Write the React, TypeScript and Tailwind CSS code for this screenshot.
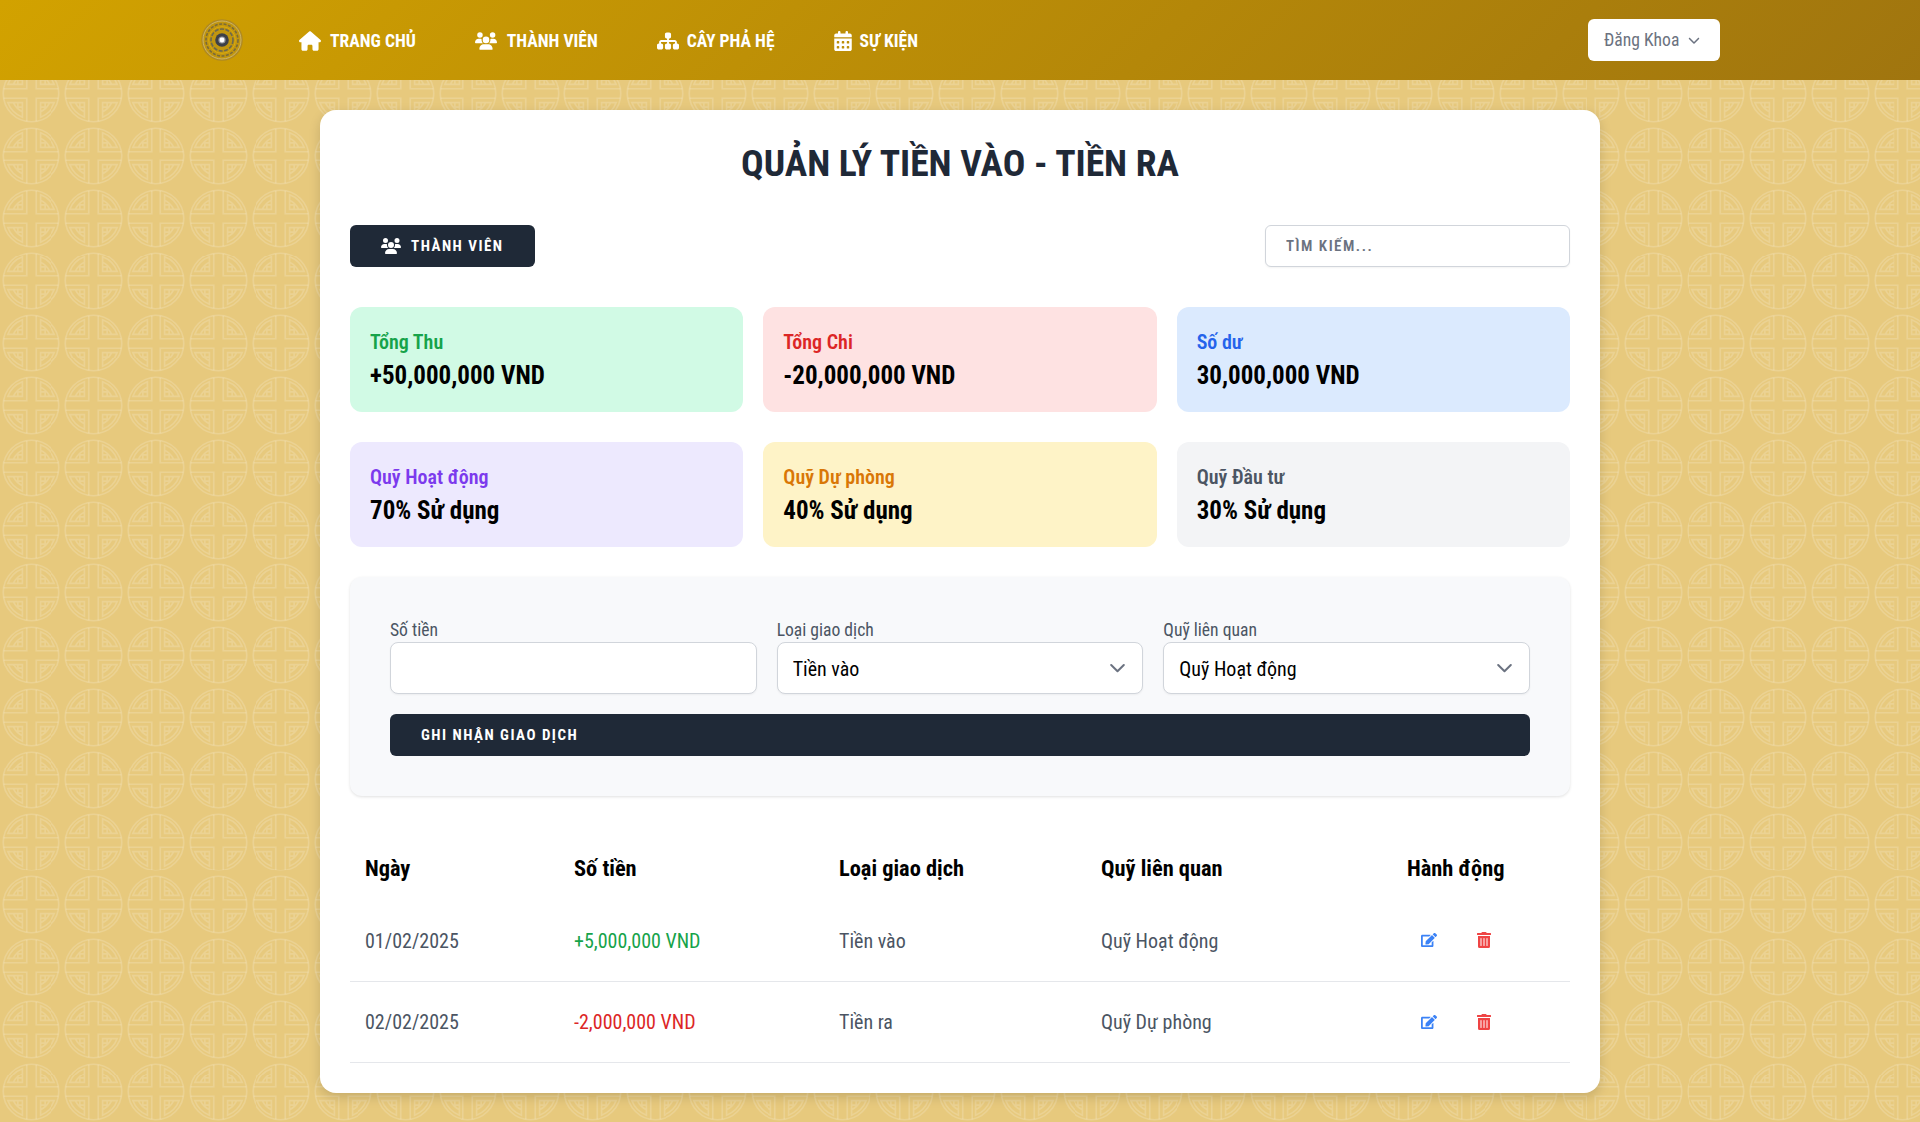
import React from "react";
import { FaHouse, FaUsers, FaSitemap, FaCalendarDays, FaChevronDown } from "react-icons/fa6";
import { FaEdit, FaTrashAlt } from "react-icons/fa";

function Logo() {
  return (
    <svg width="42" height="42" viewBox="0 0 42 42" aria-hidden="true">
      <circle cx="21" cy="21" r="20.8" fill="#a8842a" opacity="0.8" />
      <circle cx="21" cy="21" r="19" fill="#c1960f" stroke="#cdb56a" strokeWidth="1" />
      <circle cx="21" cy="21" r="16" fill="none" stroke="#7a6a3a" strokeWidth="1.6" strokeDasharray="3 1.5" />
      <circle cx="21" cy="21" r="13.4" fill="none" stroke="#d9a90f" strokeWidth="1" />
      <circle cx="21" cy="21" r="11" fill="none" stroke="#6b6850" strokeWidth="1.6" strokeDasharray="4 1.5" />
      <circle cx="21" cy="21" r="6.8" fill="#3d4048" />
      <circle cx="21" cy="21" r="3.6" fill="#9a9ca3" />
      <circle cx="21" cy="21" r="2.4" fill="#ffffff" />
    </svg>
  );
}

function NavItem({ icon, label, className }: { icon: React.ReactNode; label: string; className: string }) {
  return (
    <a className={`flex items-center pt-[2px] text-[17.6px] font-bold uppercase text-white ${className}`}>
      {icon}
      <span>{label}</span>
    </a>
  );
}

function Stat({ label, value, bg, color }: { label: string; value: string; bg: string; color: string }) {
  return (
    <div className={`h-[105px] rounded-xl px-5 pt-[21px] ${bg}`}>
      <div className={`text-[20px] font-semibold leading-[29px] ${color}`}>{label}</div>
      <div className="text-[25px] font-bold leading-[38px] text-black">{value}</div>
    </div>
  );
}

function SelectField({ label, options }: { label: string; options: string[] }) {
  return (
    <label className="block">
      <span className="block h-[25px] text-[17.6px] leading-[26px] text-[#4b5563]">{label}</span>
      <span className="relative block">
        <select className="h-[52px] w-full appearance-none rounded-lg border border-[#d1d5db] bg-white px-[15px] pt-px text-[20px] text-black shadow-[0_1px_2px_rgba(0,0,0,0.05)]">
          {options.map((o) => (
            <option key={o}>{o}</option>
          ))}
        </select>
        <svg className="absolute right-[18px] top-[21px]" width="15" height="12" viewBox="0 0 15 12" fill="none" aria-hidden="true">
          <path d="M1.2 2 7.5 8.3 13.8 2" stroke="#6b7280" strokeWidth="2" strokeLinecap="round" strokeLinejoin="round" />
        </svg>
      </span>
    </label>
  );
}

const rows = [
  { date: "01/02/2025", amount: "+5,000,000 VND", color: "text-[#16a34a]", type: "Tiền vào", fund: "Quỹ Hoạt động" },
  { date: "02/02/2025", amount: "-2,000,000 VND", color: "text-[#dc2626]", type: "Tiền ra", fund: "Quỹ Dự phòng" },
];

export default function App() {
  return (
    <div className="min-h-[1122px] bg-[#e7c97d] bg-[url('data:image/svg+xml,%3Csvg%20xmlns=%22http://www.w3.org/2000/svg%22%20xmlns:x=%22http://www.w3.org/1999/xlink%22%20width=%2262.4%22%20height=%2262.4%22%20viewBox=%22-31.2%20-31.2%2062.4%2062.4%22%3E%3Cdefs%3E%3Cpath%20id=%22q%22%20d=%22M-4.7-27.6V-4.7H-27.6M-9-23.5A25%2025%200%200%200-23.5-9H-9ZM-13.5-9V-13.5H-9V-18A19%2019%200%200%200-18-9%22/%3E%3C/defs%3E%3Cg%20fill=%22none%22%20stroke=%22%23fff%22%20stroke-opacity=%22.17%22%20stroke-width=%221.6%22%3E%3Ccircle%20r=%2228%22/%3E%3Cuse%20x:href=%22%23q%22/%3E%3Cuse%20x:href=%22%23q%22%20transform=%22scale%28-1%201%29%22/%3E%3Cuse%20x:href=%22%23q%22%20transform=%22scale%281%20-1%29%22/%3E%3Cuse%20x:href=%22%23q%22%20transform=%22scale%28-1%20-1%29%22/%3E%3C/g%3E%3C/svg%3E')] bg-[length:62.4px_62.4px] font-['Roboto','Liberation_Sans',sans-serif] [font-stretch:75%]">
      <header className="h-20 bg-[linear-gradient(135deg,#d2a200,#a0750f)]">
        <nav className="mx-auto flex h-full max-w-[1536px] items-center pl-[9px] pr-[8px]">
          <Logo />
          <NavItem className="ml-[56px]" icon={<FaHouse className="mr-[9px] text-[22px]" />} label="Trang chủ" />
          <NavItem className="ml-[59px]" icon={<FaUsers className="mr-[10px] text-[22px]" />} label="Thành viên" />
          <NavItem className="ml-[59px]" icon={<FaSitemap className="mr-[8px] text-[22px]" />} label="Cây phả hệ" />
          <NavItem className="ml-[58px]" icon={<FaCalendarDays className="mr-[7px] text-[20px]" />} label="Sự kiện" />
          <button className="ml-auto flex h-[42px] w-[132px] items-center gap-[9px] rounded-md bg-white pl-[16px] text-[17.6px] text-[#6b7280]">
            Đăng Khoa
            <FaChevronDown className="text-[12px]" />
          </button>
        </nav>
      </header>

      <main className="mx-auto mt-[30px] w-[1280px] rounded-2xl bg-white p-[30px] shadow-[0_4px_12px_rgba(0,0,0,0.15)]">
        <h1 className="h-[45px] text-center text-[37.6px] font-bold uppercase leading-[47px] text-[#1f2937]">
          Quản lý tiền vào - tiền ra
        </h1>

        <div className="mt-[40px] flex items-center justify-between">
          <button className="flex h-[42px] items-center gap-[10px] rounded-md bg-[#1f2937] px-[31px] text-[15px] font-bold uppercase tracking-[1.5px] text-white">
            <FaUsers className="text-[20px]" />
            Thành viên
          </button>
          <input
            placeholder="TÌM KIẾM..."
            className="h-[42px] w-[305px] rounded-md border border-[#d1d5db] bg-white px-5 text-[15px] font-semibold tracking-[1.5px] shadow-[0_1px_2px_rgba(0,0,0,0.05)] placeholder:text-[#6b7280]"
          />
        </div>

        <div className="mt-10 grid grid-cols-3 gap-x-5 gap-y-[30px]">
          <Stat label="Tổng Thu" value="+50,000,000 VND" bg="bg-[#d1fae5]" color="text-[#16a34a]" />
          <Stat label="Tổng Chi" value="-20,000,000 VND" bg="bg-[#fee2e2]" color="text-[#dc2626]" />
          <Stat label="Số dư" value="30,000,000 VND" bg="bg-[#dbeafe]" color="text-[#2563eb]" />
          <Stat label="Quỹ Hoạt động" value="70% Sử dụng" bg="bg-[#ede9fe]" color="text-[#7c3aed]" />
          <Stat label="Quỹ Dự phòng" value="40% Sử dụng" bg="bg-[#fef3c7]" color="text-[#d97706]" />
          <Stat label="Quỹ Đầu tư" value="30% Sử dụng" bg="bg-[#f3f4f6]" color="text-[#4b5563]" />
        </div>

        <section className="mt-[30px] rounded-xl bg-[#f8f9fb] p-10 shadow-[0_1px_3px_rgba(0,0,0,0.12)]">
          <div className="grid grid-cols-3 gap-5">
            <label className="block">
              <span className="block h-[25px] text-[17.6px] leading-[26px] text-[#4b5563]">Số tiền</span>
              <input className="h-[52px] w-full rounded-lg border border-[#d1d5db] bg-white px-[15px] text-lg shadow-[0_1px_2px_rgba(0,0,0,0.05)]" />
            </label>
            <SelectField label="Loại giao dịch" options={["Tiền vào", "Tiền ra"]} />
            <SelectField label="Quỹ liên quan" options={["Quỹ Hoạt động", "Quỹ Dự phòng", "Quỹ Đầu tư"]} />
          </div>
          <button className="mt-5 flex h-[42px] w-full items-center rounded-md bg-[#1f2937] px-[31px] text-[15px] font-bold uppercase tracking-[1.5px] text-white">
            Ghi nhận giao dịch
          </button>
        </section>

        <table className="mt-10 w-full table-fixed border-collapse text-left">
          <thead>
            <tr className="h-[64px] text-[22.4px] font-bold text-black">
              <th className="w-[209px] px-[15px] pt-[2px]">Ngày</th>
              <th className="w-[265px] px-[15px] pt-[2px]">Số tiền</th>
              <th className="w-[262px] px-[15px] pt-[2px]">Loại giao dịch</th>
              <th className="w-[306px] px-[15px] pt-[2px]">Quỹ liên quan</th>
              <th className="px-[15px] pt-[2px]">Hành động</th>
            </tr>
          </thead>
          <tbody className="text-[20px] text-[#4b5563]">
            {rows.map((r) => (
              <tr key={r.date} className="h-[81px] border-b border-[#e5e7eb]">
                <td className="px-[15px] pt-px">{r.date}</td>
                <td className={`px-[15px] pt-px ${r.color}`}>{r.amount}</td>
                <td className="px-[15px] pt-px">{r.type}</td>
                <td className="px-[15px] pt-px">{r.fund}</td>
                <td className="px-[15px]">
                  <div className="flex items-center">
                    <button className="ml-[14px] text-[16px] text-[#3b82f6]" aria-label="Sửa">
                      <FaEdit />
                    </button>
                    <button className="ml-[39px] text-[16px] text-[#ef4444]" aria-label="Xóa">
                      <FaTrashAlt />
                    </button>
                  </div>
                </td>
              </tr>
            ))}
          </tbody>
        </table>
      </main>
      <div className="h-[30px]" />
    </div>
  );
}
